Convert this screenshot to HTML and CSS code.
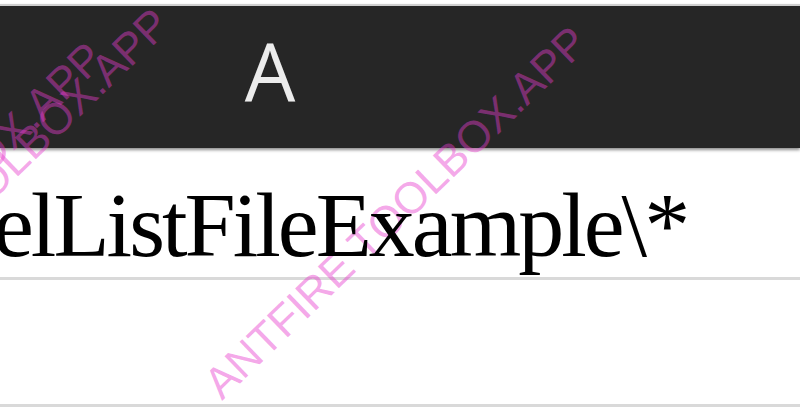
FILE: index.html
```html
<!DOCTYPE html>
<html>
<head>
<meta charset="utf-8">
<link rel="stylesheet" href="styles.css">
</head>
<body>
<div class="sheet">
  <div class="col-header">
    <div class="col-cell">A</div>
  </div>
  <div class="row row-first">
    <div class="cell-text">elListFileExample\*</div>
  </div>
  <div class="row row-second"></div>
</div>
<div class="wm wm-main">ANTFIRE TOOLBOX.APP</div>
<div class="wm wm-a">ANTFIRE TOOLBOX.APP</div>
<div class="wm wm-b">ANTFIRE TOOLBOX.APP</div>
</body>
</html>
```
FILE: styles.css
```css
html, body {
  margin: 0;
  padding: 0;
  background: #ffffff;
  width: 800px;
  height: 418px;
  overflow: hidden;
}

.sheet {
  padding-top: 4px;
}

.col-header {
  display: flex;
  height: 142px;
  background: #262626;
  border-top: 2px solid #cfcfcf;
  box-shadow: 0 2px 3px rgba(0, 0, 0, 0.45);
  position: relative;
  z-index: 1;
}

.col-cell {
  width: 540px;
  display: flex;
  align-items: center;
  justify-content: center;
  font-family: "Open Sans", "Liberation Sans", sans-serif;
  font-size: 80px;
  color: #ececec;
  padding-bottom: 16px;
  box-sizing: border-box;
}

.row {
  border-bottom: 3px solid #d9d9d9;
  box-sizing: border-box;
  overflow: hidden;
}

.row-first {
  height: 132px;
}

.row-second {
  height: 127px;
}

.cell-text {
  font-family: "Liberation Serif", serif;
  font-size: 92px;
  line-height: 92px;
  letter-spacing: -3px;
  color: #000000;
  padding-top: 31px;
  margin-left: -7px;
  white-space: nowrap;
  position: relative;
  z-index: 3;
}

.wm {
  position: absolute;
  font-family: "Liberation Sans", sans-serif;
  font-size: 44px;
  line-height: 44px;
  color: rgba(232, 60, 205, 0.45);
  white-space: nowrap;
  transform-origin: 0 37px;
  transform: rotate(-44deg);
  z-index: 2;
}

.wm-main {
  left: 222px;
  top: 364px;
}

.wm-a {
  left: -196px;
  top: 346px;
}

.wm-b {
  left: -262px;
  top: 380px;
}
```
